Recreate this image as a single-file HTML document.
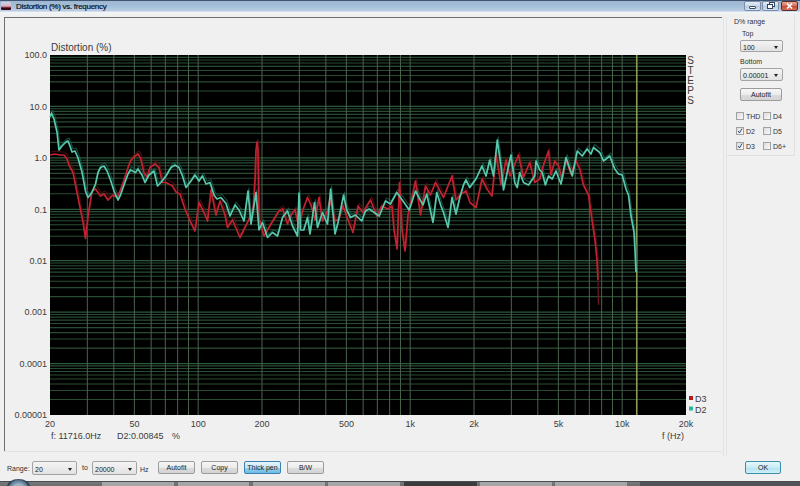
<!DOCTYPE html>
<html><head><meta charset="utf-8"><style>
html,body{margin:0;padding:0;}
body{width:800px;height:486px;overflow:hidden;position:relative;background:#f0f0f0;font-family:"Liberation Sans",sans-serif;}
.abs{position:absolute;}
#title{left:0;top:0;width:800px;height:12px;background:linear-gradient(#3f5575 0,#3f5575 1px,#9fb6ce 1px,#a3bfd9 6px,#bccee6 11px,#e6ecf3 12px);}
#strip{left:0;top:12px;width:800px;height:5px;background:linear-gradient(#f2f4f7,#eeeeec);}
.tt{font-size:8px;line-height:9px;color:#0a1020;letter-spacing:-0.28px;white-space:nowrap;-webkit-text-stroke:0.2px #0a1020;}
.lbl{font-size:7px;color:#303030;white-space:nowrap;line-height:1;}
.combo{box-sizing:border-box;border:1px solid #a4a4a4;border-radius:2px;background:linear-gradient(#f4f4f4,#e2e2e2);font-size:7px;color:#202020;line-height:1;}
.combo span{position:absolute;left:2px;top:2.5px;}
.combo i{position:absolute;right:4px;top:5px;width:0;height:0;border-left:2.5px solid transparent;border-right:2.5px solid transparent;border-top:3px solid #202020;}
.btn{box-sizing:border-box;border:1px solid #9c9c9c;border-radius:2px;background:linear-gradient(#f6f6f6 0,#ececec 50%,#dcdcdc 51%,#d4d4d4 100%);font-size:7px;color:#202020;text-align:center;line-height:10px;}
.btnb{border-color:#3c7fb1;background:linear-gradient(#e8f6fd 0,#c4e5f6 50%,#98d1ef 51%,#6cbbe6 100%);}
.cb{box-sizing:border-box;width:8px;height:8px;border:1px solid #a2a2a2;background:linear-gradient(135deg,#dcdcdc,#fafafa);}
</style></head><body>
<div id="title" class="abs"></div>
<div id="strip" class="abs"></div>
<svg class="abs" style="left:0;top:0" width="800" height="486" font-family="Liberation Sans, sans-serif">
<rect x="50.0" y="55.0" width="636.0" height="360.0" fill="#000"/>
<defs><filter id="gb" x="0" y="0" width="100%" height="100%"><feGaussianBlur stdDeviation="0.4"/></filter></defs>
<g filter="url(#gb)">
<line x1="50.0" x2="686.0" y1="90.95" y2="90.95" stroke="#2a4c33" stroke-width="1.1"/>
<line x1="50.0" x2="686.0" y1="81.89" y2="81.89" stroke="#2a4c33" stroke-width="1.1"/>
<line x1="50.0" x2="686.0" y1="75.47" y2="75.47" stroke="#2a4c33" stroke-width="1.1"/>
<line x1="50.0" x2="686.0" y1="70.48" y2="70.48" stroke="#2a4c33" stroke-width="1.1"/>
<line x1="50.0" x2="686.0" y1="66.41" y2="66.41" stroke="#2a4c33" stroke-width="1.1"/>
<line x1="50.0" x2="686.0" y1="62.97" y2="62.97" stroke="#2a4c33" stroke-width="1.1"/>
<line x1="50.0" x2="686.0" y1="59.98" y2="59.98" stroke="#2a4c33" stroke-width="1.1"/>
<line x1="50.0" x2="686.0" y1="57.35" y2="57.35" stroke="#2a4c33" stroke-width="1.1"/>
<line x1="50.0" x2="686.0" y1="142.38" y2="142.38" stroke="#2a4c33" stroke-width="1.1"/>
<line x1="50.0" x2="686.0" y1="133.32" y2="133.32" stroke="#2a4c33" stroke-width="1.1"/>
<line x1="50.0" x2="686.0" y1="126.89" y2="126.89" stroke="#2a4c33" stroke-width="1.1"/>
<line x1="50.0" x2="686.0" y1="121.91" y2="121.91" stroke="#2a4c33" stroke-width="1.1"/>
<line x1="50.0" x2="686.0" y1="117.84" y2="117.84" stroke="#2a4c33" stroke-width="1.1"/>
<line x1="50.0" x2="686.0" y1="114.39" y2="114.39" stroke="#2a4c33" stroke-width="1.1"/>
<line x1="50.0" x2="686.0" y1="111.41" y2="111.41" stroke="#2a4c33" stroke-width="1.1"/>
<line x1="50.0" x2="686.0" y1="108.78" y2="108.78" stroke="#2a4c33" stroke-width="1.1"/>
<line x1="50.0" x2="686.0" y1="193.80" y2="193.80" stroke="#2a4c33" stroke-width="1.1"/>
<line x1="50.0" x2="686.0" y1="184.75" y2="184.75" stroke="#2a4c33" stroke-width="1.1"/>
<line x1="50.0" x2="686.0" y1="178.32" y2="178.32" stroke="#2a4c33" stroke-width="1.1"/>
<line x1="50.0" x2="686.0" y1="173.34" y2="173.34" stroke="#2a4c33" stroke-width="1.1"/>
<line x1="50.0" x2="686.0" y1="169.27" y2="169.27" stroke="#2a4c33" stroke-width="1.1"/>
<line x1="50.0" x2="686.0" y1="165.82" y2="165.82" stroke="#2a4c33" stroke-width="1.1"/>
<line x1="50.0" x2="686.0" y1="162.84" y2="162.84" stroke="#2a4c33" stroke-width="1.1"/>
<line x1="50.0" x2="686.0" y1="160.21" y2="160.21" stroke="#2a4c33" stroke-width="1.1"/>
<line x1="50.0" x2="686.0" y1="245.23" y2="245.23" stroke="#2a4c33" stroke-width="1.1"/>
<line x1="50.0" x2="686.0" y1="236.18" y2="236.18" stroke="#2a4c33" stroke-width="1.1"/>
<line x1="50.0" x2="686.0" y1="229.75" y2="229.75" stroke="#2a4c33" stroke-width="1.1"/>
<line x1="50.0" x2="686.0" y1="224.77" y2="224.77" stroke="#2a4c33" stroke-width="1.1"/>
<line x1="50.0" x2="686.0" y1="220.70" y2="220.70" stroke="#2a4c33" stroke-width="1.1"/>
<line x1="50.0" x2="686.0" y1="217.25" y2="217.25" stroke="#2a4c33" stroke-width="1.1"/>
<line x1="50.0" x2="686.0" y1="214.27" y2="214.27" stroke="#2a4c33" stroke-width="1.1"/>
<line x1="50.0" x2="686.0" y1="211.64" y2="211.64" stroke="#2a4c33" stroke-width="1.1"/>
<line x1="50.0" x2="686.0" y1="296.66" y2="296.66" stroke="#2a4c33" stroke-width="1.1"/>
<line x1="50.0" x2="686.0" y1="287.61" y2="287.61" stroke="#2a4c33" stroke-width="1.1"/>
<line x1="50.0" x2="686.0" y1="281.18" y2="281.18" stroke="#2a4c33" stroke-width="1.1"/>
<line x1="50.0" x2="686.0" y1="276.20" y2="276.20" stroke="#2a4c33" stroke-width="1.1"/>
<line x1="50.0" x2="686.0" y1="272.12" y2="272.12" stroke="#2a4c33" stroke-width="1.1"/>
<line x1="50.0" x2="686.0" y1="268.68" y2="268.68" stroke="#2a4c33" stroke-width="1.1"/>
<line x1="50.0" x2="686.0" y1="265.70" y2="265.70" stroke="#2a4c33" stroke-width="1.1"/>
<line x1="50.0" x2="686.0" y1="263.07" y2="263.07" stroke="#2a4c33" stroke-width="1.1"/>
<line x1="50.0" x2="686.0" y1="348.09" y2="348.09" stroke="#2a4c33" stroke-width="1.1"/>
<line x1="50.0" x2="686.0" y1="339.03" y2="339.03" stroke="#2a4c33" stroke-width="1.1"/>
<line x1="50.0" x2="686.0" y1="332.61" y2="332.61" stroke="#2a4c33" stroke-width="1.1"/>
<line x1="50.0" x2="686.0" y1="327.62" y2="327.62" stroke="#2a4c33" stroke-width="1.1"/>
<line x1="50.0" x2="686.0" y1="323.55" y2="323.55" stroke="#2a4c33" stroke-width="1.1"/>
<line x1="50.0" x2="686.0" y1="320.11" y2="320.11" stroke="#2a4c33" stroke-width="1.1"/>
<line x1="50.0" x2="686.0" y1="317.13" y2="317.13" stroke="#2a4c33" stroke-width="1.1"/>
<line x1="50.0" x2="686.0" y1="314.50" y2="314.50" stroke="#2a4c33" stroke-width="1.1"/>
<line x1="50.0" x2="686.0" y1="399.52" y2="399.52" stroke="#2a4c33" stroke-width="1.1"/>
<line x1="50.0" x2="686.0" y1="390.46" y2="390.46" stroke="#2a4c33" stroke-width="1.1"/>
<line x1="50.0" x2="686.0" y1="384.04" y2="384.04" stroke="#2a4c33" stroke-width="1.1"/>
<line x1="50.0" x2="686.0" y1="379.05" y2="379.05" stroke="#2a4c33" stroke-width="1.1"/>
<line x1="50.0" x2="686.0" y1="374.98" y2="374.98" stroke="#2a4c33" stroke-width="1.1"/>
<line x1="50.0" x2="686.0" y1="371.54" y2="371.54" stroke="#2a4c33" stroke-width="1.1"/>
<line x1="50.0" x2="686.0" y1="368.56" y2="368.56" stroke="#2a4c33" stroke-width="1.1"/>
<line x1="50.0" x2="686.0" y1="365.92" y2="365.92" stroke="#2a4c33" stroke-width="1.1"/>
<line x1="50.0" x2="686.0" y1="106.43" y2="106.43" stroke="#2c5a3a" stroke-width="1.2"/>
<line x1="50.0" x2="686.0" y1="157.86" y2="157.86" stroke="#2c5a3a" stroke-width="1.2"/>
<line x1="50.0" x2="686.0" y1="209.29" y2="209.29" stroke="#2c5a3a" stroke-width="1.2"/>
<line x1="50.0" x2="686.0" y1="260.71" y2="260.71" stroke="#2c5a3a" stroke-width="1.2"/>
<line x1="50.0" x2="686.0" y1="312.14" y2="312.14" stroke="#2c5a3a" stroke-width="1.2"/>
<line x1="50.0" x2="686.0" y1="363.57" y2="363.57" stroke="#2c5a3a" stroke-width="1.2"/>
<line x1="87.33" x2="87.33" y1="55.0" y2="415.0" stroke="#4a624e" stroke-width="1.0"/>
<line x1="113.82" x2="113.82" y1="55.0" y2="415.0" stroke="#4a624e" stroke-width="1.0"/>
<line x1="134.36" x2="134.36" y1="55.0" y2="415.0" stroke="#4a624e" stroke-width="1.0"/>
<line x1="151.15" x2="151.15" y1="55.0" y2="415.0" stroke="#4a624e" stroke-width="1.0"/>
<line x1="165.34" x2="165.34" y1="55.0" y2="415.0" stroke="#4a624e" stroke-width="1.0"/>
<line x1="177.64" x2="177.64" y1="55.0" y2="415.0" stroke="#4a624e" stroke-width="1.0"/>
<line x1="188.48" x2="188.48" y1="55.0" y2="415.0" stroke="#4a624e" stroke-width="1.0"/>
<line x1="198.18" x2="198.18" y1="55.0" y2="415.0" stroke="#4a624e" stroke-width="1.0"/>
<line x1="262.00" x2="262.00" y1="55.0" y2="415.0" stroke="#4a624e" stroke-width="1.0"/>
<line x1="299.33" x2="299.33" y1="55.0" y2="415.0" stroke="#4a624e" stroke-width="1.0"/>
<line x1="325.82" x2="325.82" y1="55.0" y2="415.0" stroke="#4a624e" stroke-width="1.0"/>
<line x1="346.36" x2="346.36" y1="55.0" y2="415.0" stroke="#4a624e" stroke-width="1.0"/>
<line x1="363.15" x2="363.15" y1="55.0" y2="415.0" stroke="#4a624e" stroke-width="1.0"/>
<line x1="377.34" x2="377.34" y1="55.0" y2="415.0" stroke="#4a624e" stroke-width="1.0"/>
<line x1="389.64" x2="389.64" y1="55.0" y2="415.0" stroke="#4a624e" stroke-width="1.0"/>
<line x1="400.48" x2="400.48" y1="55.0" y2="415.0" stroke="#4a624e" stroke-width="1.0"/>
<line x1="410.18" x2="410.18" y1="55.0" y2="415.0" stroke="#4a624e" stroke-width="1.0"/>
<line x1="474.00" x2="474.00" y1="55.0" y2="415.0" stroke="#4a624e" stroke-width="1.0"/>
<line x1="511.33" x2="511.33" y1="55.0" y2="415.0" stroke="#4a624e" stroke-width="1.0"/>
<line x1="537.82" x2="537.82" y1="55.0" y2="415.0" stroke="#4a624e" stroke-width="1.0"/>
<line x1="558.36" x2="558.36" y1="55.0" y2="415.0" stroke="#4a624e" stroke-width="1.0"/>
<line x1="575.15" x2="575.15" y1="55.0" y2="415.0" stroke="#4a624e" stroke-width="1.0"/>
<line x1="589.34" x2="589.34" y1="55.0" y2="415.0" stroke="#4a624e" stroke-width="1.0"/>
<line x1="601.64" x2="601.64" y1="55.0" y2="415.0" stroke="#4a624e" stroke-width="1.0"/>
<line x1="612.48" x2="612.48" y1="55.0" y2="415.0" stroke="#4a624e" stroke-width="1.0"/>
<line x1="622.18" x2="622.18" y1="55.0" y2="415.0" stroke="#4a624e" stroke-width="1.0"/>
<line x1="636.76" x2="636.76" y1="55.0" y2="415.0" stroke="#8e9a58" stroke-width="1.6"/>
</g>
<defs><filter id="bl" x="-5%" y="-5%" width="110%" height="110%"><feGaussianBlur stdDeviation="0.45"/></filter></defs>
<g filter="url(#bl)">
<polyline points="50,155 55,154 60,155 64,155 67,159 69,165 73,172.5 78,197.5 83,222 85.5,238.5 88,216 92,191 95.5,189 100.5,196 104,194 108,200 113,195 117,197.5 120.5,190 124,180 128,167.5 131,160 134,157 138,154 140.5,158 144,172.5 147,177 150,167.5 155,164 159,167.5 162.5,182.5 166,182.5 172.5,186 176,192 180,194 185,209 190,221 195,231 199,202.5 204,212.5 207.5,221 211,190 216,215 220,201 225,215 227.5,227.5 232.5,220 240,237.5 245,227.5 250,217.5 253,209 255,180 256,150 257,142 258,150 259,217.5 264,236 271,224 279,211 282.5,209 287.5,224 291,215 295,210 299,227.5 302.5,211 307.5,197.5 311,205 315,220 319,197.5 322.5,221 327.5,211 330,199 335,221 339,219 343,206 349,222.5 353,232.5 358,206 363,212.5 370.5,200 376.75,216 381.75,206 388,209 392,206 394,230 397,249 399.5,182.5 402,230 405,251 408,215 415.5,181 420.5,215 425.5,186 430.5,195 435.5,182.5 443.5,197.5 452,176 456,200 461,194 466,191 470,202.5 476,207.5 482,179 487,189 492,196 496,154 501,185 506,160 510,176 518.5,155 523.5,177.5 529.75,162.5 534.75,182.5 539.75,179 543.5,165 548.5,151 551,175 554.75,161 558.5,166 562.25,179 566,160 571,174 576,161 579.75,169 583.5,185 588.5,195 592,220 595,240 597,260 598,280" fill="none" stroke="#5a1016" stroke-width="1.1" stroke-linejoin="round" opacity="0.8" transform="translate(1,-3)"/>
<polyline points="50,117 51.5,113 54,119 57,132 59,150 62,146 66,142 68,141 70,146 72,152 75,151 78,158 82,172 85.5,191 88,197.5 92,192.5 95.5,184 98,172.5 100.5,167.5 104,166 107,171 110.5,180 114,191 118,200 120.5,195 124,185 128,174 130.5,170 135.5,172.5 138,169 142,175 145,182.5 149,175 154,171 157.5,186 161,182.5 166,176 171,167.5 175,165 179,167.5 182.5,176 186,187.5 191,181 195,175 199,181 202.5,176 206,184 210,182.5 214,195 217,199 221,197.5 226,203.5 230,216 235,205 239,210 244,221 248,191 251,224 256,192.5 259,230 262.5,222.5 267.5,237.5 272.5,232.5 277.5,236 282.5,217.5 287.5,211 292.5,226 297.5,236 299,193 300.5,230 303.75,230 307.5,217.5 310,234 314.5,202.5 317.5,227.5 322.5,212.5 327.5,224 330.6,189 335,234 338,222.5 343.6,195 346.75,210 350.5,217.5 355.5,215 361.75,221 365.5,211 369.25,209 374.25,212.5 379.25,216 385.5,201 390.5,204 396.75,192.5 403,201 409.25,210 415.5,191 423,205 426.75,194 433,222.5 436.75,192.5 441,206 443.5,212.5 448,227.5 452,197.5 456,214 459.75,197.5 463.5,185 466,180 469.75,187.5 476,179 482,166 486,176 489.75,160 493.5,176 497.25,140 501,166 503.5,190 508.5,166 511,155 514.75,182.5 517.25,187.5 519.75,172.5 523.5,182.5 528.5,185 534.75,176 536,161 539.75,170 542.25,172.5 545.4,185 548.5,176 552.25,179 556,171 561,184 566,157.5 572.25,176 577.25,151 582.25,156 587.25,149 591,154 593.5,147.5 599.75,152.5 603.5,161 609.75,156 614.75,169 618.5,174 622.25,175 626,189 628.5,195 631,216 634,232 635,250 636,272" fill="none" stroke="#1c5e50" stroke-width="1.1" stroke-linejoin="round" opacity="0.8" transform="translate(1,-3)"/>
<polyline points="50,155 55,154 60,155 64,155 67,159 69,165 73,172.5 78,197.5 83,222 85.5,238.5 88,216 92,191 95.5,189 100.5,196 104,194 108,200 113,195 117,197.5 120.5,190 124,180 128,167.5 131,160 134,157 138,154 140.5,158 144,172.5 147,177 150,167.5 155,164 159,167.5 162.5,182.5 166,182.5 172.5,186 176,192 180,194 185,209 190,221 195,231 199,202.5 204,212.5 207.5,221 211,190 216,215 220,201 225,215 227.5,227.5 232.5,220 240,237.5 245,227.5 250,217.5 253,209 255,180 256,150 257,142 258,150 259,217.5 264,236 271,224 279,211 282.5,209 287.5,224 291,215 295,210 299,227.5 302.5,211 307.5,197.5 311,205 315,220 319,197.5 322.5,221 327.5,211 330,199 335,221 339,219 343,206 349,222.5 353,232.5 358,206 363,212.5 370.5,200 376.75,216 381.75,206 388,209 392,206 394,230 397,249 399.5,182.5 402,230 405,251 408,215 415.5,181 420.5,215 425.5,186 430.5,195 435.5,182.5 443.5,197.5 452,176 456,200 461,194 466,191 470,202.5 476,207.5 482,179 487,189 492,196 496,154 501,185 506,160 510,176 518.5,155 523.5,177.5 529.75,162.5 534.75,182.5 539.75,179 543.5,165 548.5,151 551,175 554.75,161 558.5,166 562.25,179 566,160 571,174 576,161 579.75,169 583.5,185 588.5,195 592,220 595,240 597,260 598,280" fill="none" stroke="#c02430" stroke-width="1.7" stroke-linejoin="round"/>
<polyline points="50,117 51.5,113 54,119 57,132 59,150 62,146 66,142 68,141 70,146 72,152 75,151 78,158 82,172 85.5,191 88,197.5 92,192.5 95.5,184 98,172.5 100.5,167.5 104,166 107,171 110.5,180 114,191 118,200 120.5,195 124,185 128,174 130.5,170 135.5,172.5 138,169 142,175 145,182.5 149,175 154,171 157.5,186 161,182.5 166,176 171,167.5 175,165 179,167.5 182.5,176 186,187.5 191,181 195,175 199,181 202.5,176 206,184 210,182.5 214,195 217,199 221,197.5 226,203.5 230,216 235,205 239,210 244,221 248,191 251,224 256,192.5 259,230 262.5,222.5 267.5,237.5 272.5,232.5 277.5,236 282.5,217.5 287.5,211 292.5,226 297.5,236 299,193 300.5,230 303.75,230 307.5,217.5 310,234 314.5,202.5 317.5,227.5 322.5,212.5 327.5,224 330.6,189 335,234 338,222.5 343.6,195 346.75,210 350.5,217.5 355.5,215 361.75,221 365.5,211 369.25,209 374.25,212.5 379.25,216 385.5,201 390.5,204 396.75,192.5 403,201 409.25,210 415.5,191 423,205 426.75,194 433,222.5 436.75,192.5 441,206 443.5,212.5 448,227.5 452,197.5 456,214 459.75,197.5 463.5,185 466,180 469.75,187.5 476,179 482,166 486,176 489.75,160 493.5,176 497.25,140 501,166 503.5,190 508.5,166 511,155 514.75,182.5 517.25,187.5 519.75,172.5 523.5,182.5 528.5,185 534.75,176 536,161 539.75,170 542.25,172.5 545.4,185 548.5,176 552.25,179 556,171 561,184 566,157.5 572.25,176 577.25,151 582.25,156 587.25,149 591,154 593.5,147.5 599.75,152.5 603.5,161 609.75,156 614.75,169 618.5,174 622.25,175 626,189 628.5,195 631,216 634,232 635,250 636,272" fill="none" stroke="#58c8ac" stroke-width="1.7" stroke-linejoin="round"/>
<line x1="598" y1="280" x2="598.5" y2="305" stroke="#6a1420" stroke-width="1.4"/></g>
<line x1="4.5" x2="4.5" y1="17" y2="452" stroke="#6e6e6e" stroke-width="1"/>
<line x1="4" x2="722" y1="17.5" y2="17.5" stroke="#6e6e6e" stroke-width="1"/>
<text x="47" y="58.3" font-size="9" text-anchor="end" fill="#3c3c3c" >100.0</text>
<text x="47" y="109.7" font-size="9" text-anchor="end" fill="#3c3c3c" >10.0</text>
<text x="47" y="161.2" font-size="9" text-anchor="end" fill="#3c3c3c" >1.0</text>
<text x="47" y="212.6" font-size="9" text-anchor="end" fill="#3c3c3c" >0.1</text>
<text x="47" y="264.0" font-size="9" text-anchor="end" fill="#3c3c3c" >0.01</text>
<text x="47" y="315.4" font-size="9" text-anchor="end" fill="#3c3c3c" >0.001</text>
<text x="47" y="366.9" font-size="9" text-anchor="end" fill="#3c3c3c" >0.0001</text>
<text x="47" y="418.3" font-size="9" text-anchor="end" fill="#3c3c3c" >0.00001</text>
<text x="50.0" y="427" font-size="9" text-anchor="middle" fill="#3c3c3c" >20</text>
<text x="134.4" y="427" font-size="9" text-anchor="middle" fill="#3c3c3c" >50</text>
<text x="198.2" y="427" font-size="9" text-anchor="middle" fill="#3c3c3c" >100</text>
<text x="262.0" y="427" font-size="9" text-anchor="middle" fill="#3c3c3c" >200</text>
<text x="346.4" y="427" font-size="9" text-anchor="middle" fill="#3c3c3c" >500</text>
<text x="410.2" y="427" font-size="9" text-anchor="middle" fill="#3c3c3c" >1k</text>
<text x="474.0" y="427" font-size="9" text-anchor="middle" fill="#3c3c3c" >2k</text>
<text x="558.4" y="427" font-size="9" text-anchor="middle" fill="#3c3c3c" >5k</text>
<text x="622.2" y="427" font-size="9" text-anchor="middle" fill="#3c3c3c" >10k</text>
<text x="686.0" y="427" font-size="9" text-anchor="middle" fill="#3c3c3c" >20k</text>
<text x="51" y="51.3" font-size="10" text-anchor="start" fill="#3c3c3c" >Distortion (%)</text>
<text x="684" y="438.5" font-size="9" text-anchor="end" fill="#3c3c3c" >f (Hz)</text>
<text x="51" y="438.5" font-size="9" text-anchor="start" fill="#3c3c3c" >f: 11716.0Hz</text>
<text x="117" y="438.5" font-size="9" text-anchor="start" fill="#3c3c3c" >D2:0.00845</text>
<text x="172" y="438.5" font-size="9" text-anchor="start" fill="#3c3c3c" >%</text>
<text x="690.5" y="63.5" font-size="10" text-anchor="middle" fill="#3c3c3c" >S</text>
<text x="690.5" y="73.7" font-size="10" text-anchor="middle" fill="#3c3c3c" >T</text>
<text x="690.5" y="83.9" font-size="10" text-anchor="middle" fill="#3c3c3c" >E</text>
<text x="690.5" y="94.1" font-size="10" text-anchor="middle" fill="#3c3c3c" >P</text>
<text x="690.5" y="104.3" font-size="10" text-anchor="middle" fill="#3c3c3c" >S</text>
<rect x="689" y="396" width="4" height="4" fill="#b01c1c"/>
<text x="695" y="402" font-size="9" text-anchor="start" fill="#3c3c3c" >D3</text>
<rect x="689" y="406.5" width="4" height="4" fill="#2cb4a0"/>
<text x="695" y="412.5" font-size="9" text-anchor="start" fill="#3c3c3c" >D2</text>
</svg>
<!-- title -->
<div class="abs" style="left:1px;top:2px;width:10px;height:8px;background:linear-gradient(#d8d4e4 0,#c8c0d8 30%,#e0b8c4 45%,#c07080 60%,#3a0a14 75%,#3a0a14 100%);border-radius:1px;"></div>
<div class="abs tt" style="left:16px;top:2px;">Distortion (%) vs. frequency</div>
<div class="abs" style="left:744px;top:1px;width:17px;height:10px;box-sizing:border-box;border:1px solid #7d8ea6;border-radius:2px;background:linear-gradient(#e4ecf6,#c8d8ea 45%,#b4c8df 50%,#cfe0f2);"></div>
<div class="abs" style="left:749px;top:6px;width:7px;height:3px;box-sizing:border-box;background:#fff;border:1px solid #3c4c64;border-radius:1px;"></div>
<div class="abs" style="left:762px;top:1px;width:17px;height:10px;box-sizing:border-box;border:1px solid #7d8ea6;border-radius:2px;background:linear-gradient(#e4ecf6,#c8d8ea 45%,#b4c8df 50%,#cfe0f2);"></div>
<svg class="abs" style="left:766px;top:2px" width="10" height="8"><rect x="3.5" y="0.5" width="5" height="4" fill="#fff" stroke="#34445c"/><rect x="1.5" y="2.5" width="5" height="4" fill="#fff" stroke="#34445c"/></svg>
<div class="abs" style="left:781px;top:1px;width:17px;height:10px;box-sizing:border-box;border:1px solid #5e2a2a;border-radius:2px;background:linear-gradient(#eaa89a,#d8705e 45%,#c44830 50%,#d87058);"></div>
<svg class="abs" style="left:786px;top:3px" width="7" height="6"><path d="M1 0.5 L6 5.5 M6 0.5 L1 5.5" stroke="#fff" stroke-width="1.6"/></svg>
<!-- right panel -->
<div class="abs" style="left:723px;top:17px;width:1px;height:439px;background:#e2e2e2;"></div>
<div class="abs" style="left:726px;top:17px;width:1px;height:439px;background:#e4e4e4;"></div>
<div class="abs" style="left:4px;top:451px;width:718px;height:1px;background:#e2e2e2;"></div>
<div class="abs" style="left:727px;top:155px;width:68px;height:1px;background:#e0e0e0;"></div>
<div class="abs" style="left:794px;top:14px;width:1px;height:142px;background:#e0e0e0;"></div>
<div class="abs lbl" style="left:734px;top:18px;">D% range</div>
<div class="abs lbl" style="left:742px;top:30px;">Top</div>
<div class="abs combo" style="left:740px;top:40px;width:43px;height:12px;"><span>100</span><i></i></div>
<div class="abs lbl" style="left:740px;top:58px;">Bottom</div>
<div class="abs combo" style="left:740px;top:68px;width:43px;height:13px;"><span>0.00001</span><i></i></div>
<div class="abs btn" style="left:740px;top:88px;width:42px;height:13px;line-height:11px;">Autofit</div>
<div class="abs cb" style="left:736px;top:112px;"></div><div class="abs lbl" style="left:746px;top:113px;">THD</div>
<div class="abs cb" style="left:763px;top:112px;"></div><div class="abs lbl" style="left:773px;top:113px;">D4</div>
<div class="abs cb" style="left:736px;top:127px;"></div><div class="abs lbl" style="left:746px;top:128px;">D2</div>
<div class="abs cb" style="left:763px;top:127px;"></div><div class="abs lbl" style="left:773px;top:128px;">D5</div>
<div class="abs cb" style="left:736px;top:142px;"></div><div class="abs lbl" style="left:746px;top:143px;">D3</div>
<div class="abs cb" style="left:763px;top:142px;"></div><div class="abs lbl" style="left:773px;top:143px;">D6+</div>
<svg class="abs" style="left:736px;top:127px" width="8" height="24"><path d="M2 4 L3.5 6 L6 1.5" stroke="#3a4a78" stroke-width="1" fill="none"/><path d="M2 19 L3.5 21 L6 16.5" stroke="#3a4a78" stroke-width="1" fill="none"/></svg>
<!-- bottom controls -->
<div class="abs lbl" style="left:7px;top:465px;">Range:</div>
<div class="abs combo" style="left:32px;top:461px;width:45px;height:14px;"><span style="top:4px">20</span><i style="top:6px"></i></div>
<div class="abs lbl" style="left:82px;top:464px;">to</div>
<div class="abs combo" style="left:92px;top:461px;width:45px;height:14px;"><span style="top:4px">20000</span><i style="top:6px"></i></div>
<div class="abs lbl" style="left:140px;top:466px;">Hz</div>
<div class="abs btn" style="left:158px;top:461px;width:37px;height:13px;line-height:11px;">Autofit</div>
<div class="abs btn" style="left:201px;top:461px;width:37px;height:13px;line-height:11px;">Copy</div>
<div class="abs btn btnb" style="left:244px;top:461px;width:37px;height:13px;line-height:11px;">Thick pen</div>
<div class="abs btn" style="left:287px;top:461px;width:37px;height:13px;line-height:11px;">B/W</div>
<div class="abs btn" style="left:745px;top:461px;width:36px;height:13px;line-height:11px;border-color:#3b8fa8;background:linear-gradient(#e6f8fc,#c6ecf6 50%,#b2e2f2 51%,#cdeef8);">OK</div>
<!-- taskbar -->
<div class="abs" style="left:0;top:481px;width:800px;height:5px;background:linear-gradient(#4a4c4e 0,#4a4c4e 1px,#76787a 1px,#6a6c6e);"></div>
<div class="abs" style="left:102px;top:482px;width:72px;height:4px;background:#a4a6a8;"></div>
<div class="abs" style="left:178px;top:482px;width:71px;height:4px;background:#a4a6a8;"></div>
<div class="abs" style="left:253px;top:482px;width:72px;height:4px;background:#a4a6a8;"></div>
<div class="abs" style="left:328px;top:482px;width:72px;height:4px;background:#a4a6a8;"></div>
<div class="abs" style="left:404px;top:482px;width:73px;height:4px;background:#3a3c3e;"></div>
<div class="abs" style="left:480px;top:482px;width:72px;height:4px;background:#a4a6a8;"></div>
<div class="abs" style="left:555px;top:482px;width:72px;height:4px;background:#a4a6a8;"></div>
<div class="abs" style="left:640px;top:482px;width:160px;height:4px;background:#505458;"></div>
<div class="abs" style="left:7px;top:479px;width:23px;height:16px;border-radius:50%;background:radial-gradient(circle at 50% 70%,#d86a3a 0,#a0b8c8 35%,#5a7890 60%,#1a2a3a 75%);"></div>
</body></html>
